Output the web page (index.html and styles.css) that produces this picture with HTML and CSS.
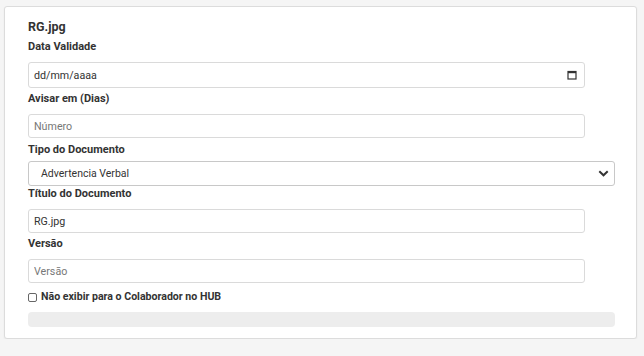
FILE: index.html
```html
<!DOCTYPE html>
<html lang="pt-BR">
<head>
    <meta charset="UTF-8">
    <meta name="viewport" content="width=device-width, initial-scale=1.0">
    <title>RG.jpg</title>
    <link rel="stylesheet" href="styles.css">
</head>
<body>
    <div class="card">
        <h3 class="doc-name">RG.jpg</h3>

        <label class="label">Data Validade</label>
        <div class="field date-field">
            <span>dd/mm/aaaa</span>
            <svg class="cal-icon" width="10" height="10" viewBox="0 0 10 10">
                <rect x="1" y="1.5" width="8" height="7.5" fill="none" stroke="#333" stroke-width="1.2"/>
                <rect x="1" y="1" width="8" height="2.2" fill="#333"/>
            </svg>
        </div>

        <label class="label">Avisar em (Dias)</label>
        <input class="field" type="text" placeholder="Número">

        <label class="label label-tight">Tipo do Documento</label>
        <div class="select-wrap">
            <div class="select">Advertencia Verbal</div>
            <svg class="chevron" width="11" height="7" viewBox="0 0 11 7">
                <path d="M1.3 1.3 L5.5 5.3 L9.7 1.3" fill="none" stroke="#333" stroke-width="2"/>
            </svg>
        </div>

        <label class="label label-flush">Título do Documento</label>
        <input class="field" type="text" value="RG.jpg">

        <label class="label">Versão</label>
        <input class="field" type="text" placeholder="Versão">

        <label class="check-row">
            <span class="check"></span>
            Não exibir para o Colaborador no HUB
        </label>

        <div class="progress"></div>
    </div>
</body>
</html>
```

FILE: styles.css
```css
* {
    margin: 0;
    padding: 0;
    box-sizing: border-box;
    font-family: Roboto, 'Liberation Sans', sans-serif;
}

body {
    background: #f5f5f5;
    color: #333;
    padding: 6px 7px 0 4px;
}

.card {
    background: #fff;
    border: 1px solid #dcdcdc;
    border-radius: 3px;
    box-shadow: 0 1px 2px rgba(0,0,0,0.06);
    padding: 11px 21px 11px 23px;
}

.doc-name {
    font-size: 12.5px;
    font-weight: 700;
    line-height: 17px;
    margin-bottom: 5px;
}

.label {
    display: block;
    font-size: 11px;
    font-weight: 700;
    line-height: 14px;
    margin: 4px 0 8px;
    color: #333;
}

.doc-name + .label {
    margin-top: 1px;
    margin-bottom: 8px;
}

.label-tight {
    margin-top: 5px;
    margin-bottom: 4px;
}

.label-flush {
    margin-top: 1px;
    margin-bottom: 8px;
}

.field {
    display: block;
    width: calc(100% - 30px);
    height: 24px;
    border: 1px solid #dadada;
    border-radius: 3px;
    padding: 0 5px;
    font-size: 10.7px;
    color: #333;
    background: #fff;
    outline: none;
}

.field::placeholder {
    color: #777;
}

.date-field {
    height: 26px;
    display: flex;
    align-items: center;
    justify-content: space-between;
    padding: 0 7px 0 5px;
}

.cal-icon {
    display: block;
}

.select-wrap {
    position: relative;
}

.select {
    height: 25px;
    border: 1px solid #c8c8c8;
    border-radius: 3px;
    padding: 0 12px;
    font-size: 10.5px;
    line-height: 23px;
    color: #333;
}

.chevron {
    position: absolute;
    right: 6px;
    top: 9px;
}

.check-row {
    display: flex;
    align-items: center;
    gap: 4px;
    font-size: 10.6px;
    font-weight: 700;
    line-height: 14px;
    margin: 7px 0 8px;
}

.check {
    width: 9px;
    height: 9px;
    border: 1px solid #666;
    border-radius: 2px;
    background: #fff;
}

.progress {
    height: 15px;
    background: #ededed;
    border-radius: 4px;
}
```
